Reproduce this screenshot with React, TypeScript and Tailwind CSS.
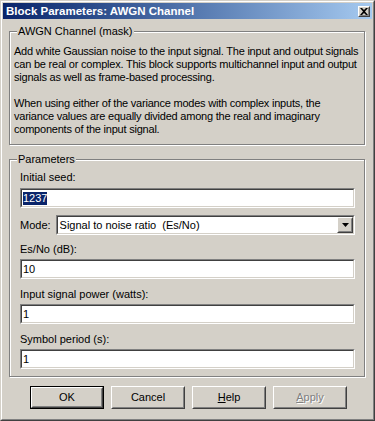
import type { ReactNode } from "react";

// ============== Win2000-style helpers =================
function Sunken({ children, className = "" }: { children?: ReactNode; className?: string }) {
  return (
    <div className={`border border-t-[#808080] border-l-[#808080] border-b-white border-r-white ${className}`}>
      <div className="h-full border border-t-[#404040] border-l-[#404040] border-b-[#d4d0c8] border-r-[#d4d0c8] bg-white flex items-center">
        {children}
      </div>
    </div>
  );
}

function Raised({ children, className = "" }: { children?: ReactNode; className?: string }) {
  return (
    <div className={`border border-t-white border-l-white border-b-[#404040] border-r-[#404040] ${className}`}>
      <div className="h-full border border-t-[#d4d0c8] border-l-[#d4d0c8] border-b-[#808080] border-r-[#808080] bg-[#d4d0c8] flex items-center justify-center">
        {children}
      </div>
    </div>
  );
}

function Group({ label, className = "", children }: { label: string; className?: string; children: ReactNode }) {
  return (
    <div className={`relative border border-[#808080] shadow-[inset_1px_1px_0_#fff,1px_1px_0_#fff] ${className}`}>
      <span className="absolute -top-[7px] left-[7px] bg-[#d4d0c8] px-[1px] leading-[13px]">{label}</span>
      {children}
    </div>
  );
}

function Field({ label, value, className = "" }: { label: string; value: string; className?: string }) {
  return (
    <div className={className}>
      <div className="leading-[13px]">{label}</div>
      <Sunken className="mt-[3px] h-[20px]">
        <span className="pl-[1px]">{value}</span>
      </Sunken>
    </div>
  );
}

export default function App() {
  return (
    <div
      className="w-[375px] h-[421px] border border-t-[#d4d0c8] border-l-[#d4d0c8] border-b-[#404040] border-r-[#404040] bg-[#d4d0c8] text-[11px] text-black"
      style={{ fontFamily: '"Liberation Sans", Arial, sans-serif' }}
    >
      <div className="h-full border border-t-white border-l-white border-b-[#808080] border-r-[#808080] p-[1px] flex flex-col">
        {/* Title bar */}
        <div className="h-[16px] bg-gradient-to-r from-[#0a246a] to-[#a6caf0] flex items-center justify-between pl-[3px] pr-[2px]">
          <span className="text-white font-bold text-[11.5px] leading-[16px]">Block Parameters: AWGN Channel</span>
          <Raised className="w-[12px] h-[11px]">
            <svg width="8" height="7" viewBox="0 0 8 7">
              <path d="M0 0h2l2 2 2-2h2L5 3.5 8 7H6L4 5 2 7H0l3-3.5z" fill="#000" />
            </svg>
          </Raised>
        </div>

        {/* Body */}
        <div className="flex-1 pl-[6px] pr-[7px] pt-[12px]">
          <Group label="AWGN Channel (mask)" className="pt-[13px] pl-[4px] pr-[3px] pb-[8px] leading-[13px] whitespace-nowrap">
            <div className="tracking-[-0.22px]">
              <p>
                Add white Gaussian noise to the input signal. The input and output signals
                <br />
                can be real or complex. This block supports multichannel input and output
                <br />
                signals as well as frame-based processing.
              </p>
              <p className="mt-[13px]">
                When using either of the variance modes with complex inputs, the
                <br />
                variance values are equally divided among the real and imaginary
                <br />
                components of the input signal.
              </p>
            </div>
          </Group>

          <Group label="Parameters" className="mt-[14px] pt-[11px] pl-[10px] pr-[9px] pb-[7px]">
            <div>
              <div className="leading-[13px]">Initial seed:</div>
              <Sunken className="mt-[4px] h-[20px]">
                <span className="ml-[1px] bg-[#0a246a] text-white leading-[13px]">1237</span>
              </Sunken>
            </div>

            <div className="mt-[7px] flex items-center gap-[5px]">
              <span>Mode:</span>
              <Sunken className="flex-1 h-[20px]">
                <span className="flex-1 pl-[2px]">Signal to noise ratio&nbsp; (Es/No)</span>
                <Raised className="w-[16px] h-[16px]">
                  <svg width="7" height="4" viewBox="0 0 7 4">
                    <path d="M0 0h7L3.5 4z" fill="#000" />
                  </svg>
                </Raised>
              </Sunken>
            </div>

            <Field label="Es/No (dB):" value="10" className="mt-[8px]" />
            <Field label="Input signal power (watts):" value="1" className="mt-[9px]" />
            <Field label="Symbol period (s):" value="1" className="mt-[9px]" />
          </Group>

          {/* Buttons */}
          <div className="mt-[9px] flex gap-[7px] pl-[21px]">
            <div className="w-[74px] h-[23px] border border-black">
              <Raised className="h-full">OK</Raised>
            </div>
            <Raised className="w-[74px] h-[23px]">Cancel</Raised>
            <Raised className="w-[74px] h-[23px]">
              <span>
                <span className="underline">H</span>elp
              </span>
            </Raised>
            <Raised className="w-[74px] h-[23px]">
              <span className="text-[#808080] [text-shadow:1px_1px_0_#fff]">
                <span className="underline">A</span>pply
              </span>
            </Raised>
          </div>
        </div>
      </div>
    </div>
  );
}
